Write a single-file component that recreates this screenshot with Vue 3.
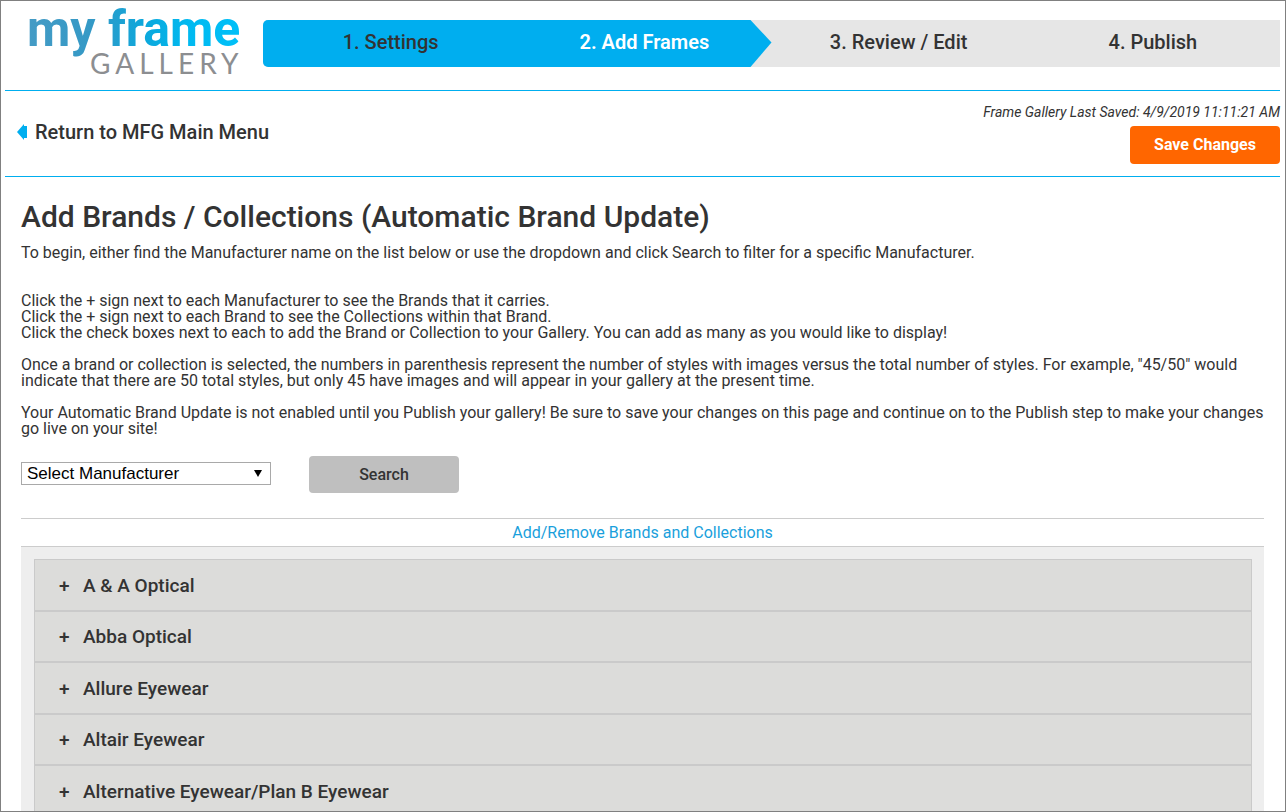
<script setup>
import { ref } from 'vue'

const steps = [
  { label: '1. Settings', state: 'done' },
  { label: '2. Add Frames', state: 'active' },
  { label: '3. Review / Edit', state: 'todo' },
  { label: '4. Publish', state: 'todo' },
]

const manufacturers = [
  'A & A Optical',
  'Abba Optical',
  'Allure Eyewear',
  'Altair Eyewear',
  'Alternative Eyewear/Plan B Eyewear',
]

const selected = ref('')
</script>

<template>
  <div class="page">
    <header class="top">
      <svg class="logo" width="220" height="80" viewBox="0 0 220 80" role="img" aria-label="my frame gallery">
        <defs>
          <linearGradient id="brand" gradientUnits="userSpaceOnUse" x1="6" y1="0" x2="219" y2="0">
            <stop offset="0" stop-color="#449bc5" />
            <stop offset="0.3" stop-color="#3499c6" />
            <stop offset="0.55" stop-color="#0ca8dc" />
            <stop offset="0.75" stop-color="#00b9f0" />
            <stop offset="1" stop-color="#00c0f8" />
          </linearGradient>
        </defs>
        <text class="logo-name" x="5" y="45" fill="url(#brand)">my frame</text>
        <text class="logo-sub" x="68" y="73">GALLERY</text>
      </svg>
      <nav class="steps" aria-label="Progress">
        <a v-for="s in steps" :key="s.label" href="#" class="step" :class="s.state">{{ s.label }}</a>
      </nav>
    </header>

    <div class="toolbar">
      <a href="#" class="back">
        <svg width="10" height="16" viewBox="0 0 10 16" aria-hidden="true">
          <path d="M0 8 7 0V2H10V14H7V16Z" fill="#00aeef" />
        </svg>
        <span>Return to MFG Main Menu</span>
      </a>
      <div class="save">
        <em class="saved">Frame Gallery Last Saved: 4/9/2019 11:11:21 AM</em>
        <button type="button" class="btn primary">Save Changes</button>
      </div>
    </div>

    <main class="content">
      <h1>Add Brands / Collections (Automatic Brand Update)</h1>
      <p class="intro">To begin, either find the Manufacturer name on the list below or use the dropdown and click Search to filter for a specific Manufacturer.</p>
      <p>
        Click the + sign next to each Manufacturer to see the Brands that it carries.<br />
        Click the + sign next to each Brand to see the Collections within that Brand.<br />
        Click the check boxes next to each to add the Brand or Collection to your Gallery. You can add as many as you would like to display!
      </p>
      <p>Once a brand or collection is selected, the numbers in parenthesis represent the number of styles with images versus the total number of styles. For example, "45/50" would indicate that there are 50 total styles, but only 45 have images and will appear in your gallery at the present time.</p>
      <p>Your Automatic Brand Update is not enabled until you Publish your gallery! Be sure to save your changes on this page and continue on to the Publish step to make your changes go live on your site!</p>

      <form class="filter" @submit.prevent>
        <div class="picker">
          <select v-model="selected" aria-label="Manufacturer">
            <option value="">Select Manufacturer</option>
            <option v-for="m in manufacturers" :key="m" :value="m">{{ m }}</option>
          </select>
          <svg class="caret" width="8" height="7" viewBox="0 0 8 7" aria-hidden="true"><path d="M0 0H8L4 7Z" /></svg>
        </div>
        <button type="submit" class="btn search">Search</button>
      </form>

      <h2>Add/Remove Brands and Collections</h2>
      <ul class="list">
        <li v-for="m in manufacturers" :key="m">
          <button type="button" class="row" aria-expanded="false"><span class="plus">+</span><span>{{ m }}</span></button>
        </li>
      </ul>
    </main>
  </div>
</template>

<style>
body {
  margin: 0;
  background: #fff;
}
</style>

<style scoped>
.page {
  box-sizing: border-box;
  height: 100vh;
  overflow: hidden;
  padding: 0 5px 0 4px;
  border: 1px solid #808080;
  font-family: Roboto, "Liberation Sans", sans-serif;
  font-size: 16px;
  line-height: 16px;
  font-weight: 400;
  color: #333;
}
a {
  color: inherit;
  text-decoration: none;
}
.top {
  display: flex;
  align-items: flex-start;
  height: 89px;
  border-bottom: 1px solid #00aeef;
}
.logo {
  flex: none;
  margin-left: 17px;
  margin-right: 21px;
}
.logo-name {
  font-size: 50px;
  font-weight: 700;
}
.logo-sub {
  font-family: Lato, sans-serif;
  font-size: 28px;
  font-weight: 400;
  letter-spacing: 5px;
  fill: #8c8e91;
}
.steps {
  flex: 1;
  display: grid;
  grid-template-columns: repeat(4, 1fr);
  margin-top: 19px;
  border-radius: 5px 0 0 5px;
  overflow: hidden;
  background: #e6e6e6;
}
.step {
  line-height: 45px;
  padding-bottom: 2px;
  text-align: center;
  font-size: 20px;
  font-weight: 500;
}
.done,
.active {
  background: #00aeef;
}
.done {
  margin-right: -1px;
}
.active {
  color: #fff;
  font-weight: 600;
  clip-path: polygon(0 0, calc(100% - 21px) 0, 100% 48%, calc(100% - 21px) 100%, 0 100%);
}
.toolbar {
  display: flex;
  justify-content: space-between;
  height: 85px;
  border-bottom: 1px solid #00aeef;
}
.back {
  display: flex;
  align-items: center;
  gap: 8px;
  padding: 0 0 4px 12px;
  font-size: 20px;
  font-weight: 500;
  line-height: 24px;
}
.save {
  display: flex;
  flex-direction: column;
  align-items: flex-end;
  padding-top: 13px;
}
.saved {
  font-size: 14px;
  margin-bottom: 6px;
}
.btn {
  width: 150px;
  border: 0;
  border-radius: 4px;
  font: 500 16px/20px Roboto, "Liberation Sans", sans-serif;
}
.primary {
  height: 38px;
  background: #f60;
  color: #fff;
  font-weight: 700;
}
.content {
  padding: 0 16px;
}
h1 {
  margin: 22px 0 10px;
  font-size: 30px;
  line-height: 36px;
  font-weight: 500;
}
p {
  margin: 0 0 16px;
}
.intro {
  margin-bottom: 32px;
}
.filter {
  display: flex;
  align-items: center;
  gap: 38px;
  margin: 19px 0 25px;
}
.picker {
  position: relative;
  width: 250px;
  margin-bottom: 2px;
}
select {
  appearance: none;
  display: block;
  width: 100%;
  height: 23px;
  padding: 0 24px 0 5px;
  border: 1px solid #a9a9a9;
  border-radius: 0;
  background: #fff;
  color: #000;
  font: 17px/20px "Liberation Sans", Arial, sans-serif;
}
.caret {
  position: absolute;
  right: 9px;
  top: 8px;
  pointer-events: none;
}
.search {
  height: 37px;
  background: #bfbfbf;
  color: #333;
}
h2 {
  margin: 0;
  border: solid #ccc;
  border-width: 1px 0;
  color: #1a9fdc;
  font-size: 16px;
  line-height: 27px;
  font-weight: 400;
  text-align: center;
}
.list {
  margin: 0;
  padding: 12px 12px 0 13px;
  list-style: none;
  background: #eee;
}
.row {
  display: flex;
  align-items: center;
  box-sizing: border-box;
  width: 100%;
  height: 51px;
  padding: 1px 24px 0;
  border: 1px solid #cacaca;
  background: #dcdcda;
  color: #333;
  font: 500 19px/24px Roboto, "Liberation Sans", sans-serif;
  text-align: left;
}
li:nth-child(odd) .row {
  height: 52px;
}
.plus {
  width: 24px;
}
</style>
